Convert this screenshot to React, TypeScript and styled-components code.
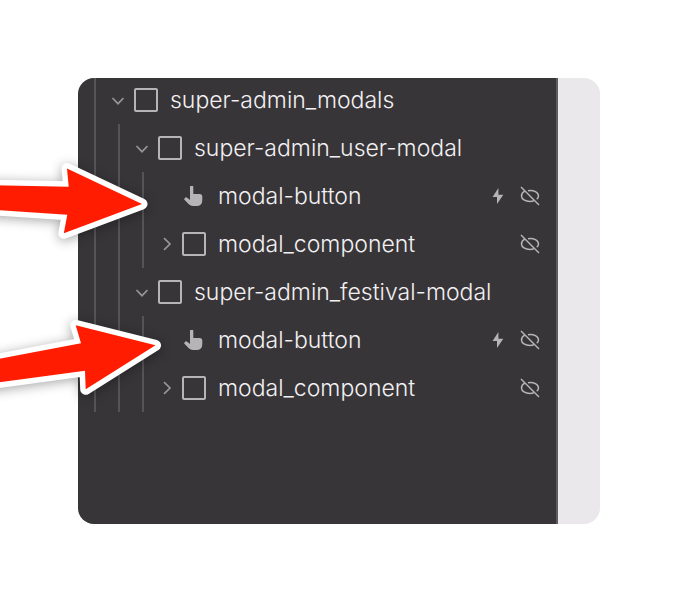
import React, { useState } from "react";
import styled, { createGlobalStyle } from "styled-components";

const GlobalStyle = createGlobalStyle`
  *, *::before, *::after { box-sizing: border-box; }
  body {
    margin: 0;
    background: #ffffff;
    font-family: Inter, "Liberation Sans", sans-serif;
  }
`;

const Page = styled.main`
  position: relative;
  display: flex;
  min-height: 100vh;
  padding: 78px;
  overflow: hidden;
`;

const Frame = styled.section`
  display: flex;
  flex: 1;
  overflow: hidden;
  border-radius: 16px;
  background: #eae8eb;
`;

const Navigator = styled.nav`
  flex: 1;
  min-width: 0;
  padding-left: 16px;
  border-right: 2px solid #5d5b5e;
  background: #383538;
`;

const CanvasStrip = styled.div`
  flex: 0 0 42px;
`;

const Branch = styled.ul<{ $root?: boolean }>`
  list-style: none;
  margin: ${(p) => (p.$root ? "-2px 0 0 0" : "0 0 0 22px")};
  padding: 0;
  border-left: 2px solid #565457;
`;

const Row = styled.div`
  display: flex;
  align-items: center;
  height: 48px;
  padding: 0 16px 0 15px;
`;

const Toggle = styled.button`
  display: flex;
  flex: 0 0 14px;
  height: 24px;
  align-items: center;
  justify-content: center;
  margin: 0 9px 0 0;
  padding: 0;
  border: 0;
  background: none;
  color: #969497;
  cursor: pointer;
`;

const ToggleSpace = styled.span`
  flex: 0 0 23px;
`;

const NodeLabel = styled.label`
  display: flex;
  flex: 1;
  min-width: 0;
  align-items: center;
  gap: 12px;
  color: #f2f0f3;
  font-size: 23px;
  font-weight: 300;
  line-height: 28px;
  white-space: nowrap;
`;

const NodeText = styled(NodeLabel).attrs({ as: "span" })``;

const NodeBox = styled.input`
  appearance: none;
  flex: none;
  width: 24px;
  height: 24px;
  margin: 0;
  border: 2px solid #b6b4b7;
  border-radius: 2px;
  &:checked {
    box-shadow: inset 0 0 0 4px #383538;
    background: #b6b4b7;
  }
`;

const Actions = styled.div`
  display: flex;
  align-items: center;
  gap: 16px;
  color: #b6b4b7;
`;

const IconButton = styled.button<{ $width: number }>`
  display: flex;
  width: ${(p) => p.$width}px;
  height: 20px;
  padding: 0;
  border: 0;
  background: none;
  color: inherit;
  cursor: pointer;
`;

const Arrows = styled.svg`
  position: absolute;
  top: 0;
  left: 0;
  pointer-events: none;
  polygon {
    fill: #ff1c00;
    stroke: #ffffff;
    stroke-width: 11px;
    stroke-linejoin: round;
    paint-order: stroke;
    filter: drop-shadow(0 2px 6px rgba(0, 0, 0, 0.35));
  }
`;

const Chevron = ({ open }: { open: boolean }) => (
  <svg width="14" height="14" viewBox="0 0 14 14" fill="none" stroke="currentColor" strokeWidth="1.7" aria-hidden="true">
    <path d={open ? "M1.5 5 L7 10.7 L12.5 5" : "M5 1.2 L11 7 L5 12.8"} />
  </svg>
);

const Hand = () => (
  <svg width="24" height="24" viewBox="0 0 24 24" fill="#b6b4b7" aria-hidden="true">
    <path d="M8 2.6 Q8 2 8.6 2 H10.7 Q11.3 2 11.3 2.6 V10 H17.5 Q20.3 10 20.3 12.8 V16 Q20.3 22 14.5 22 H11 Q8.5 22 6.8 20.2 L2 15.2 L3.4 13.6 Q4 13 4.8 13.5 L8 16 Z" />
  </svg>
);

const Bolt = () => (
  <svg width="12" height="20" viewBox="0 0 12 20" fill="currentColor" aria-hidden="true">
    <path d="M6.4 2 L0.6 11 H5 V18 L11.3 8.8 H6.4 Z" />
  </svg>
);

const HiddenEye = () => (
  <svg width="20" height="20" viewBox="0 0 20 20" fill="none" stroke="currentColor" strokeWidth="1.5" aria-hidden="true">
    <path d="M1 1 L19 19" />
    <path d="M4.8 5.2 C2.6 6.4 1.5 8.2 1.5 10 C1.5 13.2 5.3 15.4 10 15.4 C11.5 15.4 12.7 15.2 13.8 14.8" />
    <path d="M8 4.7 C13.8 3.7 18.5 6.4 18.5 10 C18.5 11.3 17.8 12.3 16.8 13.1" />
  </svg>
);

type TreeNode = {
  name: string;
  kind: "block" | "button";
  open?: boolean;
  hidden?: boolean;
  children?: TreeNode[];
};

const modalParts: TreeNode[] = [
  { name: "modal-button", kind: "button", hidden: true },
  { name: "modal_component", kind: "block", hidden: true },
];

const tree: TreeNode = {
  name: "super-admin_modals",
  kind: "block",
  open: true,
  children: [
    { name: "super-admin_user-modal", kind: "block", open: true, children: modalParts },
    { name: "super-admin_festival-modal", kind: "block", open: true, children: modalParts },
  ],
};

function Node({ node }: { node: TreeNode }) {
  const [open, setOpen] = useState(Boolean(node.open));
  return (
    <li>
      <Row>
        {node.kind === "block" ? (
          <>
            <Toggle type="button" aria-label={`Toggle ${node.name}`} aria-expanded={open} onClick={() => setOpen(!open)}>
              <Chevron open={open} />
            </Toggle>
            <NodeLabel>
              <NodeBox type="checkbox" />
              {node.name}
            </NodeLabel>
          </>
        ) : (
          <>
            <ToggleSpace />
            <NodeText>
              <Hand />
              {node.name}
            </NodeText>
          </>
        )}
        {node.hidden && (
          <Actions>
            {node.kind === "button" && (
              <IconButton $width={12} type="button" aria-label="Interactions">
                <Bolt />
              </IconButton>
            )}
            <IconButton $width={20} type="button" aria-label={`Show ${node.name}`}>
              <HiddenEye />
            </IconButton>
          </Actions>
        )}
      </Row>
      {open && node.children && (
        <Branch>
          {node.children.map((child) => (
            <Node key={child.name} node={child} />
          ))}
        </Branch>
      )}
    </li>
  );
}

export default function App() {
  return (
    <>
      <GlobalStyle />
      <Page>
        <Frame>
          <Navigator aria-label="Navigator">
            <Branch $root>
              <Node node={tree} />
            </Branch>
          </Navigator>
          <CanvasStrip />
        </Frame>
        <Arrows width="180" height="420" viewBox="0 0 180 420" aria-hidden="true">
          <polygon points="-20,185 68.7,186.7 67,168.5 142,204 63.8,233.3 67.3,214.7 -20,209" />
          <polygon points="-20,362.5 81,343.3 75.7,325.3 155.5,345.3 85.7,389.3 85,370.7 -20,385" />
        </Arrows>
      </Page>
    </>
  );
}
